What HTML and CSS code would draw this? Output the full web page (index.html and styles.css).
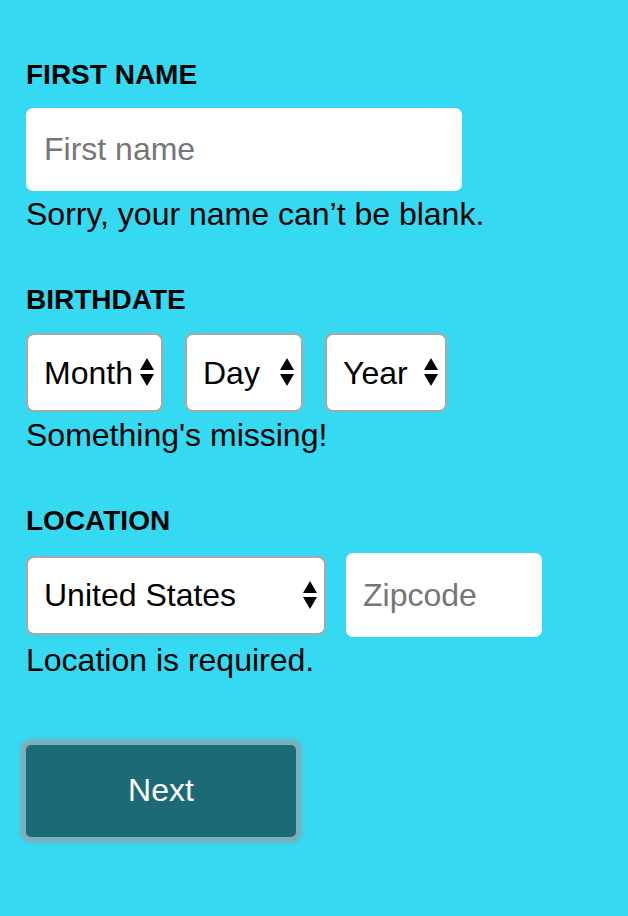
FILE: index.html
```html
<!DOCTYPE html>
<html lang="en">
<head>
<meta charset="utf-8">
<title>Sign up</title>
<link rel="stylesheet" href="styles.css">
</head>
<body>
<form class="form">
  <div class="field field-first">
    <label class="label" for="fname">FIRST NAME</label>
    <input class="text-input name-input" id="fname" type="text" placeholder="First name">
    <p class="error">Sorry, your name can’t be blank.</p>
  </div>

  <div class="field">
    <div class="label">BIRTHDATE</div>
    <div class="row row-date">
      <span class="select-wrap w-month">
        <select class="select"><option>Month</option></select>
        <svg class="arrows" width="14" height="28" viewBox="0 0 14 28"><polygon points="7,0 14,12 0,12"/><polygon points="0,16 14,16 7,28"/></svg>
      </span>
      <span class="select-wrap w-day">
        <select class="select"><option>Day</option></select>
        <svg class="arrows" width="14" height="28" viewBox="0 0 14 28"><polygon points="7,0 14,12 0,12"/><polygon points="0,16 14,16 7,28"/></svg>
      </span>
      <span class="select-wrap w-year">
        <select class="select"><option>Year</option></select>
        <svg class="arrows" width="14" height="28" viewBox="0 0 14 28"><polygon points="7,0 14,12 0,12"/><polygon points="0,16 14,16 7,28"/></svg>
      </span>
    </div>
    <p class="error">Something's missing!</p>
  </div>

  <div class="field">
    <div class="label">LOCATION</div>
    <div class="row row-loc">
      <span class="select-wrap w-country">
        <select class="select"><option>United States</option></select>
        <svg class="arrows" width="14" height="28" viewBox="0 0 14 28"><polygon points="7,0 14,12 0,12"/><polygon points="0,16 14,16 7,28"/></svg>
      </span>
      <input class="text-input zip-input" type="text" placeholder="Zipcode">
    </div>
    <p class="error">Location is required.</p>
  </div>

  <button class="next" type="button">Next</button>
</form>
</body>
</html>
```

FILE: styles.css
```css
* { box-sizing: border-box; }

html, body {
  margin: 0;
  padding: 0;
}

body {
  background: #35d9f1;
  font-family: "Liberation Sans", Arial, Helvetica, sans-serif;
  color: #000;
  width: 628px;
  height: 916px;
}

.form {
  padding: 59px 26px 0 26px;
  display: flex;
  flex-direction: column;
  align-items: flex-start;
}

.field {
  display: flex;
  flex-direction: column;
  align-items: flex-start;
  margin-bottom: 52px;
}

.label {
  display: block;
  font-size: 28px;
  line-height: 32px;
  font-weight: bold;
  margin-bottom: 17px;
}

.text-input {
  border: none;
  background: #fff;
  border-radius: 7px;
  font-family: inherit;
  font-size: 32px;
  color: #000;
  padding: 0 0 0 18px;
  outline: none;
}

.text-input::placeholder {
  color: #767676;
}

.name-input {
  width: 436px;
  height: 83px;
}

.zip-input {
  width: 196px;
  height: 84px;
  padding-left: 17px;
}

.error {
  margin: 5px 0 0 0;
  font-size: 32px;
  line-height: 36px;
}

.row {
  display: flex;
  align-items: center;
}

.row-date { gap: 22px; }
.row-loc { gap: 20px; margin-top: -1px; }

.select-wrap {
  position: relative;
  display: block;
  height: 79px;
}

.w-month { width: 137px; }
.w-day { width: 118px; }
.w-year { width: 122px; }
.w-country { width: 300px; }

.select {
  -webkit-appearance: none;
  appearance: none;
  width: 100%;
  height: 100%;
  border: 2px solid #a8a8a8;
  border-radius: 8px;
  background: #fff;
  font-family: inherit;
  font-size: 32px;
  color: #000;
  padding: 0 0 0 16px;
  margin: 0;
  outline: none;
}

.arrows {
  position: absolute;
  right: 9px;
  top: 25px;
  fill: #000;
  pointer-events: none;
}

.next {
  margin-top: 15px;
  width: 270px;
  height: 92px;
  border: none;
  border-radius: 5px;
  background: #1b6a76;
  color: #fff;
  font-family: inherit;
  font-size: 32px;
  line-height: 1;
  padding: 0 0 3px 0;
  box-shadow: 0 0 3px 6px #79b0bd;
  cursor: pointer;
}
```
